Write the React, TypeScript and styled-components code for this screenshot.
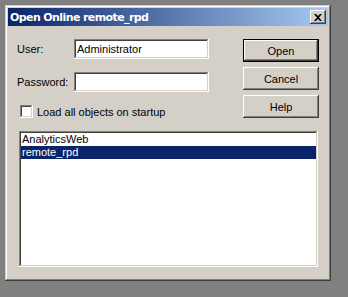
import React from 'react';
import styled, { createGlobalStyle } from 'styled-components';

const colors = {
  desktop: '#808080',
  face: '#d4d0c8',
  shadow: '#808080',
  darkShadow: '#404040',
  highlight: '#ffffff',
  selection: '#0a246a',
  titleStart: '#0a246a',
  titleEnd: '#a6caf0',
};

const raised = `
  box-shadow: inset -1px -1px ${colors.darkShadow}, inset 1px 1px ${colors.highlight},
    inset -2px -2px ${colors.shadow}, inset 2px 2px ${colors.face};
`;

const sunken = `
  box-shadow: inset -1px -1px ${colors.highlight}, inset 1px 1px ${colors.shadow},
    inset -2px -2px ${colors.face}, inset 2px 2px ${colors.darkShadow};
`;

const GlobalStyle = createGlobalStyle`
  html, body {
    margin: 0;
    padding: 0;
    background: ${colors.desktop};
    width: 348px;
    height: 297px;
    overflow: hidden;
  }
  body {
    font-family: "Liberation Sans", Arial, sans-serif;
    font-size: 11px;
    color: #000;
  }
`;

const Desktop = styled.div`
  padding: 5px 0 0 5px;
`;

const Window = styled.div`
  width: 326px;
  height: 276px;
  box-sizing: border-box;
  padding: 3px;
  background: ${colors.face};
  box-shadow: inset -1px -1px ${colors.darkShadow}, inset 1px 1px ${colors.face},
    inset -2px -2px ${colors.shadow}, inset 2px 2px ${colors.highlight};
  display: flex;
  flex-direction: column;
`;

const TitleBar = styled.div`
  height: 18px;
  display: flex;
  align-items: center;
  justify-content: space-between;
  padding: 0 2px 0 2px;
  background: linear-gradient(to right, ${colors.titleStart}, ${colors.titleEnd});
`;

const TitleText = styled.span`
  color: #fff;
  font-family: "DejaVu Sans", Verdana, sans-serif;
  font-weight: bold;
  font-size: 11px;
  letter-spacing: -0.6px;
`;

const CloseButton = styled.div`
  width: 16px;
  height: 14px;
  background: ${colors.face};
  ${raised};
  display: flex;
  align-items: center;
  justify-content: center;
`;

const Body = styled.div`
  padding: 13px 9px 0 9px;
  display: flex;
  flex-direction: column;
`;

const Top = styled.div`
  display: flex;
  justify-content: space-between;
`;

const Form = styled.div`
  display: grid;
  grid-template-columns: 57px 135px;
  grid-template-rows: 20px 20px 13px;
  row-gap: 13px;
  align-items: center;
`;

const Label = styled.label`
  line-height: 13px;
`;

const Field = styled.div`
  height: 20px;
  box-sizing: border-box;
  background: #fff;
  ${sunken};
  padding: 3px 3px 0 3px;
  line-height: 14px;
  white-space: nowrap;
  overflow: hidden;
`;

const CheckRow = styled.div`
  grid-column: 1 / span 2;
  display: flex;
  align-items: center;
  gap: 4px;
  padding-left: 3px;
`;

const CheckBox = styled.div`
  width: 13px;
  height: 13px;
  box-sizing: border-box;
  background: #fff;
  ${sunken};
`;

const Buttons = styled.div`
  display: flex;
  flex-direction: column;
  gap: 5px;
`;

const Button = styled.div<{ $default?: boolean }>`
  width: 76px;
  height: 23px;
  box-sizing: border-box;
  display: flex;
  align-items: center;
  justify-content: center;
  background: ${colors.face};
  ${({ $default }) =>
    $default
      ? `box-shadow: inset 0 0 0 1px #000, inset -2px -2px ${colors.darkShadow}, inset 2px 2px ${colors.highlight},
    inset -3px -3px ${colors.shadow};`
      : raised}
`;

const ListBox = styled.div`
  margin: 13px 1px 0 2px;
  height: 136px;
  box-sizing: border-box;
  background: #fff;
  ${sunken};
  padding: 2px;
`;

const ListItem = styled.div<{ $selected?: boolean }>`
  height: 13px;
  line-height: 13px;
  padding-left: 1px;
  white-space: nowrap;
  color: ${({ $selected }) => ($selected ? '#fff' : '#000')};
  background: ${({ $selected }) => ($selected ? colors.selection : 'transparent')};
`;

const items = [
  { name: 'AnalyticsWeb', selected: false },
  { name: 'remote_rpd', selected: true },
];

export default function App() {
  return (
    <>
      <GlobalStyle />
      <Desktop>
        <Window>
          <TitleBar>
            <TitleText>Open Online remote_rpd</TitleText>
            <CloseButton>
              <svg width="8" height="7" viewBox="0 0 8 7">
                <path d="M0 0h2l2 2 2-2h2L5 3.5 8 7H6L4 5 2 7H0l3-3.5z" fill="#000" />
              </svg>
            </CloseButton>
          </TitleBar>
          <Body>
            <Top>
              <Form>
                <Label>User:</Label>
                <Field>Administrator</Field>
                <Label>Password:</Label>
                <Field />
                <CheckRow>
                  <CheckBox />
                  <span>Load all objects on startup</span>
                </CheckRow>
              </Form>
              <Buttons>
                <Button $default>Open</Button>
                <Button>Cancel</Button>
                <Button>Help</Button>
              </Buttons>
            </Top>
            <ListBox>
              {items.map((item) => (
                <ListItem key={item.name} $selected={item.selected}>
                  {item.name}
                </ListItem>
              ))}
            </ListBox>
          </Body>
        </Window>
      </Desktop>
    </>
  );
}
